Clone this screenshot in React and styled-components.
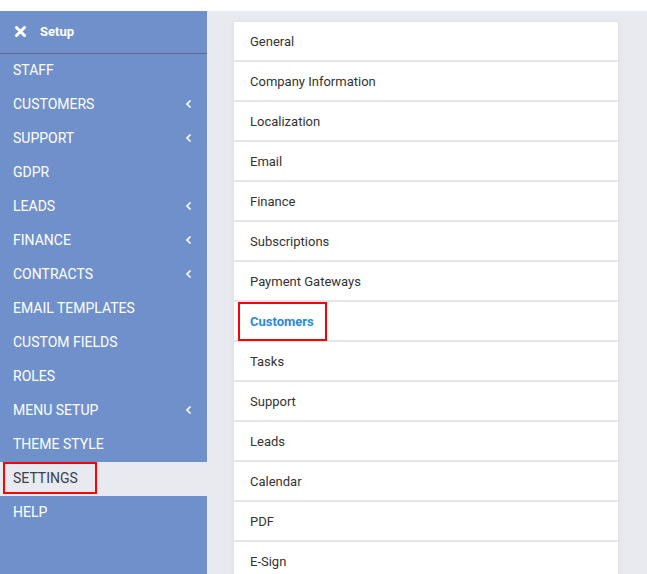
import React from "react";
import styled, { createGlobalStyle } from "styled-components";

const GlobalStyle = createGlobalStyle`
  html, body {
    margin: 0;
    padding: 0;
    background: #ffffff;
    font-family: Roboto, "Liberation Sans", Arial, sans-serif;
  }
  * { box-sizing: border-box; }
`;

const Page = styled.div`
  display: flex;
  margin-top: 11px;
  height: 563px;
  overflow: hidden;
`;

const Sidebar = styled.nav`
  width: 207px;
  flex-shrink: 0;
  background: #7090cc;
  display: flex;
  flex-direction: column;
`;

const SetupHeader = styled.div`
  height: 43px;
  display: flex;
  align-items: center;
  gap: 13px;
  padding: 0 0 2px 13px;
  border-bottom: 1px solid #5b6b88;
  color: #ffffff;
  font-size: 13px;
  font-weight: 700;
`;

const CloseIcon = styled.span`
  width: 14px;
  display: flex;
  justify-content: center;
`;

const MenuItem = styled.div`
  height: 34px;
  display: flex;
  align-items: center;
  justify-content: space-between;
  padding: 0 15px 2px 13px;
  font-size: 14px;
  font-weight: 400;
  text-transform: uppercase;
  color: ${p => (p.$active ? "#3c4049" : "#ffffff")};
  background: ${p => (p.$active ? "#e9eaef" : "transparent")};
`;

const MenuLabel = styled.span`
  position: relative;
  ${p =>
    p.$marked &&
    `
    &::after {
      content: "";
      position: absolute;
      left: -10px;
      right: -19px;
      top: -8px;
      bottom: -8px;
      border: 2px solid #ff0000;
    }
  `}
`;

const Main = styled.main`
  flex: 1;
  background: #e9eaef;
  padding: 10px 28px 0 26px;
`;

const Panel = styled.div`
  background: #ffffff;
  border: 1px solid #e2e3e7;
  box-shadow: 0 0 6px rgba(0, 0, 0, 0.04);
`;

const Row = styled.div`
  height: 40px;
  display: flex;
  align-items: center;
  padding-left: 16px;
  border-bottom: 2px solid #e6e6e8;
  font-size: 13px;
  color: ${p => (p.$active ? "#2a8ad8" : "#333333")};
  font-weight: ${p => (p.$active ? 700 : 400)};
`;

const RowLabel = styled.span`
  position: relative;
  ${p =>
    p.$marked &&
    `
    &::after {
      content: "";
      position: absolute;
      left: -12px;
      right: -13px;
      top: -12px;
      bottom: -12px;
      border: 2px solid #ff0000;
    }
  `}
`;

const Chevron = () => (
  <svg width="7" height="10" viewBox="0 0 7 10">
    <path d="M5.5 1.5 L2 5 L5.5 8.5" fill="none" stroke="#ffffff" strokeWidth="1.7" />
  </svg>
);

const menu = [
  { label: "Staff" },
  { label: "Customers", sub: true },
  { label: "Support", sub: true },
  { label: "GDPR" },
  { label: "Leads", sub: true },
  { label: "Finance", sub: true },
  { label: "Contracts", sub: true },
  { label: "Email Templates" },
  { label: "Custom Fields" },
  { label: "Roles" },
  { label: "Menu Setup", sub: true },
  { label: "Theme Style" },
  { label: "Settings", active: true },
  { label: "Help" },
];

const settings = [
  "General",
  "Company Information",
  "Localization",
  "Email",
  "Finance",
  "Subscriptions",
  "Payment Gateways",
  "Customers",
  "Tasks",
  "Support",
  "Leads",
  "Calendar",
  "PDF",
  "E-Sign",
];

export default function App() {
  return (
    <>
      <GlobalStyle />
      <Page>
        <Sidebar>
          <SetupHeader>
            <CloseIcon>
              <svg width="11" height="11" viewBox="0 0 11 11">
                <path d="M1.5 1.5 L9.5 9.5 M9.5 1.5 L1.5 9.5" stroke="#ffffff" strokeWidth="3" strokeLinecap="round" />
              </svg>
            </CloseIcon>
            Setup
          </SetupHeader>
          {menu.map(m => (
            <MenuItem key={m.label} $active={m.active}>
              <MenuLabel $marked={m.active}>{m.label}</MenuLabel>
              {m.sub && <Chevron />}
            </MenuItem>
          ))}
        </Sidebar>
        <Main>
          <Panel>
            {settings.map(s => (
              <Row key={s} $active={s === "Customers"}>
                <RowLabel $marked={s === "Customers"}>{s}</RowLabel>
              </Row>
            ))}
          </Panel>
        </Main>
      </Page>
    </>
  );
}
